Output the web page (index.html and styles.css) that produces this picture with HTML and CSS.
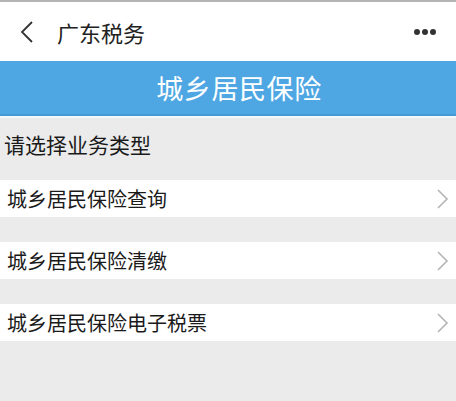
FILE: index.html
```html
<!DOCTYPE html>
<html lang="zh-CN">
<head>
<meta charset="utf-8">
<link rel="stylesheet" href="styles.css">
</head>
<body>
<div class="page">
  <header class="topbar">
    <svg class="back" width="14" height="24" viewBox="0 0 14 24"><path d="M12 2 L2 12 L12 22" fill="none" stroke="#333" stroke-width="1.8"/></svg>
    <span class="app-title">广东税务</span>
    <span class="more"><i></i><i></i><i></i></span>
  </header>
  <div class="banner">城乡居民保险</div>
  <div class="banner-edge"></div>
  <div class="prompt">请选择业务类型</div>
  <div class="list">
    <div class="row"><span>城乡居民保险查询</span><svg class="chev" width="14" height="22" viewBox="0 0 14 22"><path d="M2 2 L11 11 L2 20" fill="none" stroke="#b5b5b5" stroke-width="1.6"/></svg></div>
    <div class="row"><span>城乡居民保险清缴</span><svg class="chev" width="14" height="22" viewBox="0 0 14 22"><path d="M2 2 L11 11 L2 20" fill="none" stroke="#b5b5b5" stroke-width="1.6"/></svg></div>
    <div class="row"><span>城乡居民保险电子税票</span><svg class="chev" width="14" height="22" viewBox="0 0 14 22"><path d="M2 2 L11 11 L2 20" fill="none" stroke="#b5b5b5" stroke-width="1.6"/></svg></div>
  </div>
</div>
</body>
</html>
```
FILE: styles.css
```css
html, body { margin: 0; padding: 0; }
body {
  background: #ebebeb;
  font-family: "Noto Sans CJK SC", "Noto Sans", sans-serif;
  width: 456px;
  height: 401px;
  overflow: hidden;
}
.page { display: flex; flex-direction: column; }
.topbar {
  height: 59px;
  border-top: 2px solid #b4b4b4;
  background: #fff;
  display: flex;
  align-items: center;
  padding: 0 20px 0 20px;
  box-sizing: content-box;
}
.back { flex: none; margin-right: 23px; }
.app-title { font-size: 22px; color: #222; flex: 1; line-height: 1; }
.more { display: flex; gap: 2px; margin-right: 0; }
.more i { width: 6px; height: 6px; border-radius: 50%; background: #333; display: block; }
.banner {
  height: 53px;
  background: #4ea7e3;
  color: #fff;
  font-size: 27px;
  letter-spacing: 0.6px;
  display: flex;
  align-items: center;
  justify-content: center;
  padding-left: 22px;
  border-bottom: 2px solid #4599d4;
}
.banner-edge { height: 2px; background: #f4f8fa; }
.prompt {
  font-size: 21px;
  color: #1a1a1a;
  padding-left: 4px;
  height: 52px;
  display: flex;
  align-items: center;
  margin-bottom: 10px;
}
.list { display: flex; flex-direction: column; gap: 25px; }
.row {
  background: #fff;
  height: 37px;
  display: flex;
  align-items: center;
  justify-content: space-between;
  padding: 0 6px 0 7px;
  font-size: 20px;
  color: #1a1a1a;
}
.chev { flex: none; }
```
